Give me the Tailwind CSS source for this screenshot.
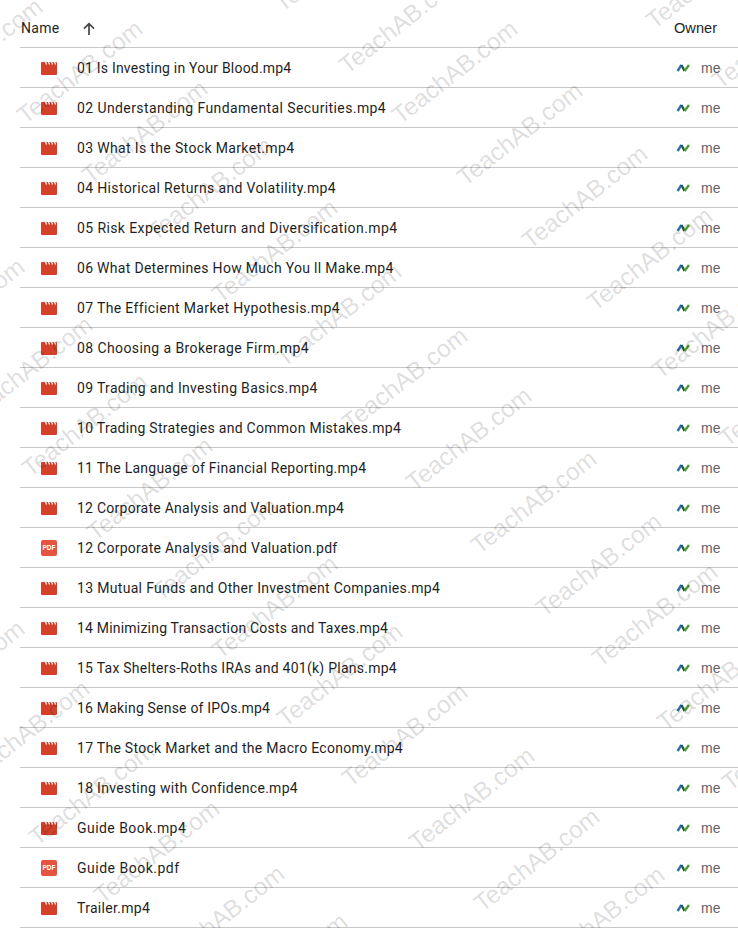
<!DOCTYPE html>
<html lang="en">
<head>
    <meta charset="UTF-8" />
    <title>Drive folder</title>
    <script src="https://cdn.jsdelivr.net/npm/@tailwindcss/browser@4"></script>
</head>
<body class="bg-white">

    <!-- Shared icons -->
    <svg width="0" height="0" class="absolute">
        <symbol id="video" viewBox="0 0 16 13">
            <path fill="#d5402b" d="M0 1a1 1 0 0 1 1-1h14a1 1 0 0 1 1 1v11a1 1 0 0 1-1 1H1a1 1 0 0 1-1-1z"/>
            <path fill="#fff" d="M4 0h1.3l.8 2.4H4.8zM7 0h1.3l.8 2.4H7.8zM10 0h1.3l.8 2.4h-1.3zM13 0h1.3l.8 2.4h-1.3z"/>
        </symbol>
        <symbol id="owner" viewBox="0 0 20 20">
            <circle cx="10" cy="10" r="9.5" fill="#fff" stroke="#f6f6f6"/>
            <path fill="none" stroke="#2f6cb0" stroke-width="2.4" d="M5.5 13l4-6"/>
            <path fill="none" stroke="#1f5f4a" stroke-width="2.4" d="M9.5 7l3 6"/>
            <path fill="none" stroke="#4f9a2c" stroke-width="2.4" d="M12.5 13l4.5-6"/>
        </symbol>
    </svg>

    <div class="w-[738px] h-[928px] relative overflow-hidden font-['Roboto',sans-serif] text-[14px] text-[#1f1f1f]">

        <!-- Header -->
        <div class="ml-5 h-12 flex items-center border-b border-[#c7c7c7] pl-px pt-[10px]">
            <span class="text-[#1f1f1f] tracking-[0.3px]">Name</span>
            <svg class="ml-[21px] w-4 h-4" viewBox="0 0 16 16"><path fill="none" stroke="#444746" stroke-width="1.7" d="M8 14V3M3 7.7 8 2.7l5 5"/></svg>
            <span class="ml-auto mr-[21px] font-['Liberation_Sans',sans-serif] text-[14.6px]">Owner</span>
        </div>

        <!-- File rows -->
        <div class="ml-5 flex flex-col *:h-10 *:flex *:items-center *:border-b *:border-[#c7c7c7] *:pl-[21px] *:pt-px">
            <div><svg class="w-4 h-[13px]"><use href="#video"/></svg><span class="ml-5 flex-1 tracking-[0.2px]">01 Is Investing in Your Blood.mp4</span><svg class="w-5 h-5"><use href="#owner"/></svg><span class="ml-[9px] w-[37px] text-[#5f6368] font-['Liberation_Sans',sans-serif]">me</span></div>
            <div><svg class="w-4 h-[13px]"><use href="#video"/></svg><span class="ml-5 flex-1 tracking-[0.4px]">02 Understanding Fundamental Securities.mp4</span><svg class="w-5 h-5"><use href="#owner"/></svg><span class="ml-[9px] w-[37px] text-[#5f6368] font-['Liberation_Sans',sans-serif]">me</span></div>
            <div><svg class="w-4 h-[13px]"><use href="#video"/></svg><span class="ml-5 flex-1 tracking-[0.35px]">03 What Is the Stock Market.mp4</span><svg class="w-5 h-5"><use href="#owner"/></svg><span class="ml-[9px] w-[37px] text-[#5f6368] font-['Liberation_Sans',sans-serif]">me</span></div>
            <div><svg class="w-4 h-[13px]"><use href="#video"/></svg><span class="ml-5 flex-1 tracking-[0.35px]">04 Historical Returns and Volatility.mp4</span><svg class="w-5 h-5"><use href="#owner"/></svg><span class="ml-[9px] w-[37px] text-[#5f6368] font-['Liberation_Sans',sans-serif]">me</span></div>
            <div><svg class="w-4 h-[13px]"><use href="#video"/></svg><span class="ml-5 flex-1 tracking-[0.4px]">05 Risk Expected Return and Diversification.mp4</span><svg class="w-5 h-5"><use href="#owner"/></svg><span class="ml-[9px] w-[37px] text-[#5f6368] font-['Liberation_Sans',sans-serif]">me</span></div>
            <div><svg class="w-4 h-[13px]"><use href="#video"/></svg><span class="ml-5 flex-1 tracking-[0.3px]">06 What Determines How Much You ll Make.mp4</span><svg class="w-5 h-5"><use href="#owner"/></svg><span class="ml-[9px] w-[37px] text-[#5f6368] font-['Liberation_Sans',sans-serif]">me</span></div>
            <div><svg class="w-4 h-[13px]"><use href="#video"/></svg><span class="ml-5 flex-1 tracking-[0.35px]">07 The Efficient Market Hypothesis.mp4</span><svg class="w-5 h-5"><use href="#owner"/></svg><span class="ml-[9px] w-[37px] text-[#5f6368] font-['Liberation_Sans',sans-serif]">me</span></div>
            <div><svg class="w-4 h-[13px]"><use href="#video"/></svg><span class="ml-5 flex-1 tracking-[0.4px]">08 Choosing a Brokerage Firm.mp4</span><svg class="w-5 h-5"><use href="#owner"/></svg><span class="ml-[9px] w-[37px] text-[#5f6368] font-['Liberation_Sans',sans-serif]">me</span></div>
            <div><svg class="w-4 h-[13px]"><use href="#video"/></svg><span class="ml-5 flex-1 tracking-[0.33px]">09 Trading and Investing Basics.mp4</span><svg class="w-5 h-5"><use href="#owner"/></svg><span class="ml-[9px] w-[37px] text-[#5f6368] font-['Liberation_Sans',sans-serif]">me</span></div>
            <div><svg class="w-4 h-[13px]"><use href="#video"/></svg><span class="ml-5 flex-1 tracking-[0.28px]">10 Trading Strategies and Common Mistakes.mp4</span><svg class="w-5 h-5"><use href="#owner"/></svg><span class="ml-[9px] w-[37px] text-[#5f6368] font-['Liberation_Sans',sans-serif]">me</span></div>
            <div><svg class="w-4 h-[13px]"><use href="#video"/></svg><span class="ml-5 flex-1 tracking-[0.25px]">11 The Language of Financial Reporting.mp4</span><svg class="w-5 h-5"><use href="#owner"/></svg><span class="ml-[9px] w-[37px] text-[#5f6368] font-['Liberation_Sans',sans-serif]">me</span></div>
            <div><svg class="w-4 h-[13px]"><use href="#video"/></svg><span class="ml-5 flex-1 tracking-[0.25px]">12 Corporate Analysis and Valuation.mp4</span><svg class="w-5 h-5"><use href="#owner"/></svg><span class="ml-[9px] w-[37px] text-[#5f6368] font-['Liberation_Sans',sans-serif]">me</span></div>
            <div><div class="w-4 h-4 rounded-[2px] bg-[#e5533f] flex items-center justify-center"><span class="text-[6.5px] leading-none font-bold text-white font-['Liberation_Sans',sans-serif]">PDF</span></div><span class="ml-5 flex-1 tracking-[0.27px]">12 Corporate Analysis and Valuation.pdf</span><svg class="w-5 h-5"><use href="#owner"/></svg><span class="ml-[9px] w-[37px] text-[#5f6368] font-['Liberation_Sans',sans-serif]">me</span></div>
            <div><svg class="w-4 h-[13px]"><use href="#video"/></svg><span class="ml-5 flex-1 tracking-[0.32px]">13 Mutual Funds and Other Investment Companies.mp4</span><svg class="w-5 h-5"><use href="#owner"/></svg><span class="ml-[9px] w-[37px] text-[#5f6368] font-['Liberation_Sans',sans-serif]">me</span></div>
            <div><svg class="w-4 h-[13px]"><use href="#video"/></svg><span class="ml-5 flex-1 tracking-[0.2px]">14 Minimizing Transaction Costs and Taxes.mp4</span><svg class="w-5 h-5"><use href="#owner"/></svg><span class="ml-[9px] w-[37px] text-[#5f6368] font-['Liberation_Sans',sans-serif]">me</span></div>
            <div><svg class="w-4 h-[13px]"><use href="#video"/></svg><span class="ml-5 flex-1 tracking-[0.25px]">15 Tax Shelters-Roths IRAs and 401(k) Plans.mp4</span><svg class="w-5 h-5"><use href="#owner"/></svg><span class="ml-[9px] w-[37px] text-[#5f6368] font-['Liberation_Sans',sans-serif]">me</span></div>
            <div><svg class="w-4 h-[13px]"><use href="#video"/></svg><span class="ml-5 flex-1 tracking-[0.2px]">16 Making Sense of IPOs.mp4</span><svg class="w-5 h-5"><use href="#owner"/></svg><span class="ml-[9px] w-[37px] text-[#5f6368] font-['Liberation_Sans',sans-serif]">me</span></div>
            <div><svg class="w-4 h-[13px]"><use href="#video"/></svg><span class="ml-5 flex-1 tracking-[0.28px]">17 The Stock Market and the Macro Economy.mp4</span><svg class="w-5 h-5"><use href="#owner"/></svg><span class="ml-[9px] w-[37px] text-[#5f6368] font-['Liberation_Sans',sans-serif]">me</span></div>
            <div><svg class="w-4 h-[13px]"><use href="#video"/></svg><span class="ml-5 flex-1 tracking-[0.3px]">18 Investing with Confidence.mp4</span><svg class="w-5 h-5"><use href="#owner"/></svg><span class="ml-[9px] w-[37px] text-[#5f6368] font-['Liberation_Sans',sans-serif]">me</span></div>
            <div><svg class="w-4 h-[13px]"><use href="#video"/></svg><span class="ml-5 flex-1 tracking-[0.45px]">Guide Book.mp4</span><svg class="w-5 h-5"><use href="#owner"/></svg><span class="ml-[9px] w-[37px] text-[#5f6368] font-['Liberation_Sans',sans-serif]">me</span></div>
            <div><div class="w-4 h-4 rounded-[2px] bg-[#e5533f] flex items-center justify-center"><span class="text-[6.5px] leading-none font-bold text-white font-['Liberation_Sans',sans-serif]">PDF</span></div><span class="ml-5 flex-1 tracking-[0.5px]">Guide Book.pdf</span><svg class="w-5 h-5"><use href="#owner"/></svg><span class="ml-[9px] w-[37px] text-[#5f6368] font-['Liberation_Sans',sans-serif]">me</span></div>
            <div><svg class="w-4 h-[13px]"><use href="#video"/></svg><span class="ml-5 flex-1 tracking-[0.3px]">Trailer.mp4</span><svg class="w-5 h-5"><use href="#owner"/></svg><span class="ml-[9px] w-[37px] text-[#5f6368] font-['Liberation_Sans',sans-serif]">me</span></div>
        </div>

        <!-- Watermark stamped over the page -->
        <div class="absolute inset-0 translate-x-[10px] translate-y-[8px] pointer-events-none font-['Liberation_Sans',sans-serif] text-[24.5px] leading-none text-black/15 *:absolute *:whitespace-nowrap *:origin-bottom-left *:rotate-[-38deg]">
            <span class="left-[-82px] top-[74px]">TeachAB.com</span>
            <span class="left-[18px] top-[96px]">TeachAB.com</span>
            <span class="left-[83px] top-[156px]">TeachAB.com</span>
            <span class="left-[148px] top-[213px]">TeachAB.com</span>
            <span class="left-[213px] top-[275px]">TeachAB.com</span>
            <span class="left-[277px] top-[339px]">TeachAB.com</span>
            <span class="left-[343px] top-[403px]">TeachAB.com</span>
            <span class="left-[407px] top-[463px]">TeachAB.com</span>
            <span class="left-[472px] top-[526px]">TeachAB.com</span>
            <span class="left-[537px] top-[589px]">TeachAB.com</span>
            <span class="left-[593px] top-[639px]">TeachAB.com</span>
            <span class="left-[658px] top-[703px]">TeachAB.com</span>
            <span class="left-[723px] top-[763px]">TeachAB.com</span>
            <span class="left-[275px] top-[-16px]">TeachAB.com</span>
            <span class="left-[340px] top-[46px]">TeachAB.com</span>
            <span class="left-[393px] top-[96px]">TeachAB.com</span>
            <span class="left-[458px] top-[158px]">TeachAB.com</span>
            <span class="left-[523px] top-[221px]">TeachAB.com</span>
            <span class="left-[588px] top-[283px]">TeachAB.com</span>
            <span class="left-[653px] top-[351px]">TeachAB.com</span>
            <span class="left-[720px] top-[419px]">TeachAB.com</span>
            <span class="left-[647px] top-[1px]">TeachAB.com</span>
            <span class="left-[713px] top-[61px]">TeachAB.com</span>
            <span class="left-[-100px] top-[334px]">TeachAB.com</span>
            <span class="left-[-32px] top-[392px]">TeachAB.com</span>
            <span class="left-[23px] top-[449px]">TeachAB.com</span>
            <span class="left-[88px] top-[513px]">TeachAB.com</span>
            <span class="left-[153px] top-[573px]">TeachAB.com</span>
            <span class="left-[213px] top-[631px]">TeachAB.com</span>
            <span class="left-[278px] top-[699px]">TeachAB.com</span>
            <span class="left-[343px] top-[759px]">TeachAB.com</span>
            <span class="left-[410px] top-[823px]">TeachAB.com</span>
            <span class="left-[475px] top-[884px]">TeachAB.com</span>
            <span class="left-[540px] top-[942px]">TeachAB.com</span>
            <span class="left-[-100px] top-[696px]">TeachAB.com</span>
            <span class="left-[-35px] top-[756px]">TeachAB.com</span>
            <span class="left-[30px] top-[818px]">TeachAB.com</span>
            <span class="left-[95px] top-[876px]">TeachAB.com</span>
            <span class="left-[160px] top-[941px]">TeachAB.com</span>
            <span class="left-[223px] top-[989px]">TeachAB.com</span>
        </div>
    </div>

</body>
</html>
